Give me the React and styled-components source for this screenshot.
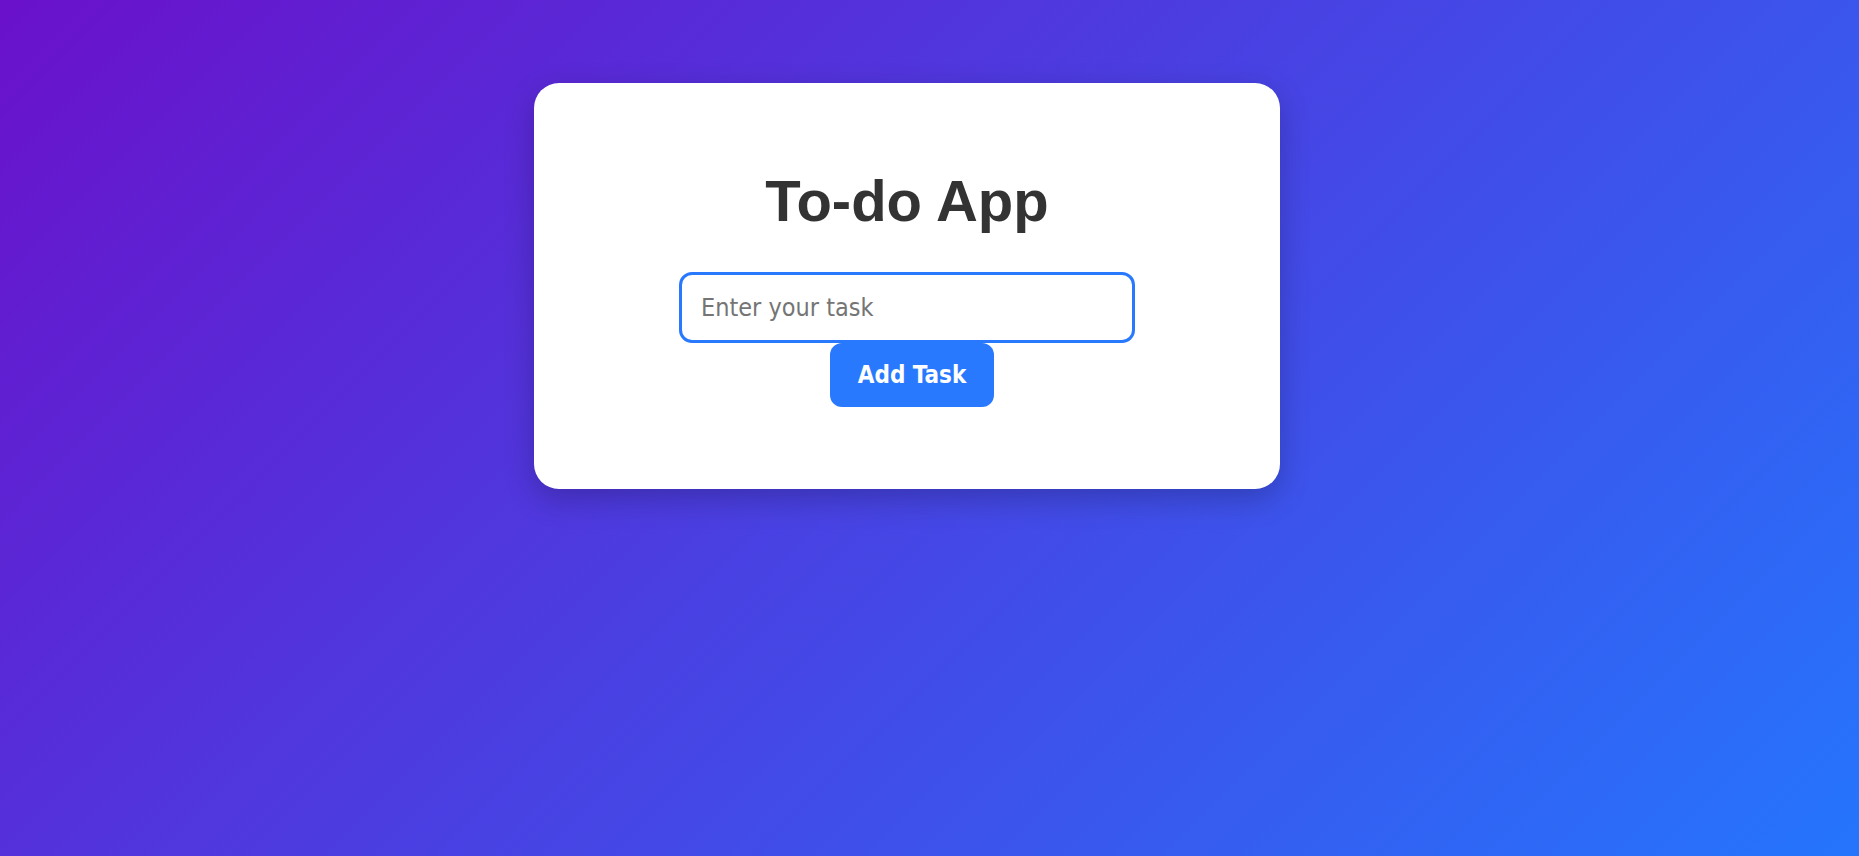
import { useState } from "react";
import styled, { createGlobalStyle } from "styled-components";

const GlobalStyle = createGlobalStyle`
  html, body {
    margin: 0;
    padding: 0;
  }

  body {
    font-family: "Liberation Sans", Arial, sans-serif;
  }
`

const Page = styled.main`
  min-height: 100vh;
  box-sizing: border-box;
  display: flex;
  flex-direction: column;
  align-items: center;
  padding: 83px 45px 0 0;
  background: linear-gradient(135deg, #6a11cb 0%, #2575fc 100%);
`

const Card = styled.section`
  width: 746px;
  box-sizing: border-box;
  padding: 85px 40px 82px;
  background: #fff;
  border-radius: 25px;
  box-shadow: 0 10px 30px rgba(0, 0, 0, 0.22);
  display: flex;
  flex-direction: column;
  align-items: center;
`

const Title = styled.h1`
  margin: 0 0 37px;
  font-family: "Liberation Sans", Arial, sans-serif;
  font-size: 58px;
  line-height: 1.15;
  font-weight: 700;
  color: #333;
`

const TaskForm = styled.form`
  display: flex;
  flex-direction: column;
  align-items: center;
`

const TaskInput = styled.input`
  width: 456px;
  box-sizing: border-box;
  padding: 19px;
  border: 3px solid #2979ff;
  border-radius: 13px;
  outline: none;
  font-family: "DejaVu Sans Condensed", "DejaVu Sans", sans-serif;
  font-size: 25px;
  line-height: 27px;
  color: #333;

  &::placeholder {
    color: #757575;
  }
`

const AddButton = styled.button`
  margin-left: 10px;
  padding: 18px 28px;
  border: none;
  border-radius: 12px;
  background: #2979ff;
  color: #fff;
  font-family: "DejaVu Sans Condensed", "DejaVu Sans", sans-serif;
  font-size: 24px;
  line-height: 28px;
  font-weight: 700;
  cursor: pointer;
`

const TaskList = styled.ul`
  margin: 0;
  padding: 0;
  list-style: none;
`

const App = () => {
  const [task, setTask] = useState("");
  const [tasks, setTasks] = useState([]);

  function handleSubmit(e) {
    e.preventDefault();
    if (!task.trim()) return;
    setTasks([...tasks, task.trim()]);
    setTask("");
  }

  return (
    <>
      <GlobalStyle />
      <Page>
        <Card>
          <Title>To-do App</Title>
          <TaskForm onSubmit={handleSubmit}>
            <TaskInput
              autoFocus
              placeholder="Enter your task"
              value={task}
              onChange={e => setTask(e.target.value)}
            />
            <AddButton type="submit">Add Task</AddButton>
          </TaskForm>
          {tasks.length > 0 && (
            <TaskList>
              {tasks.map((item, index) => <li key={index}>{item}</li>)}
            </TaskList>
          )}
        </Card>
      </Page>
    </>
  )
};

export default App;
